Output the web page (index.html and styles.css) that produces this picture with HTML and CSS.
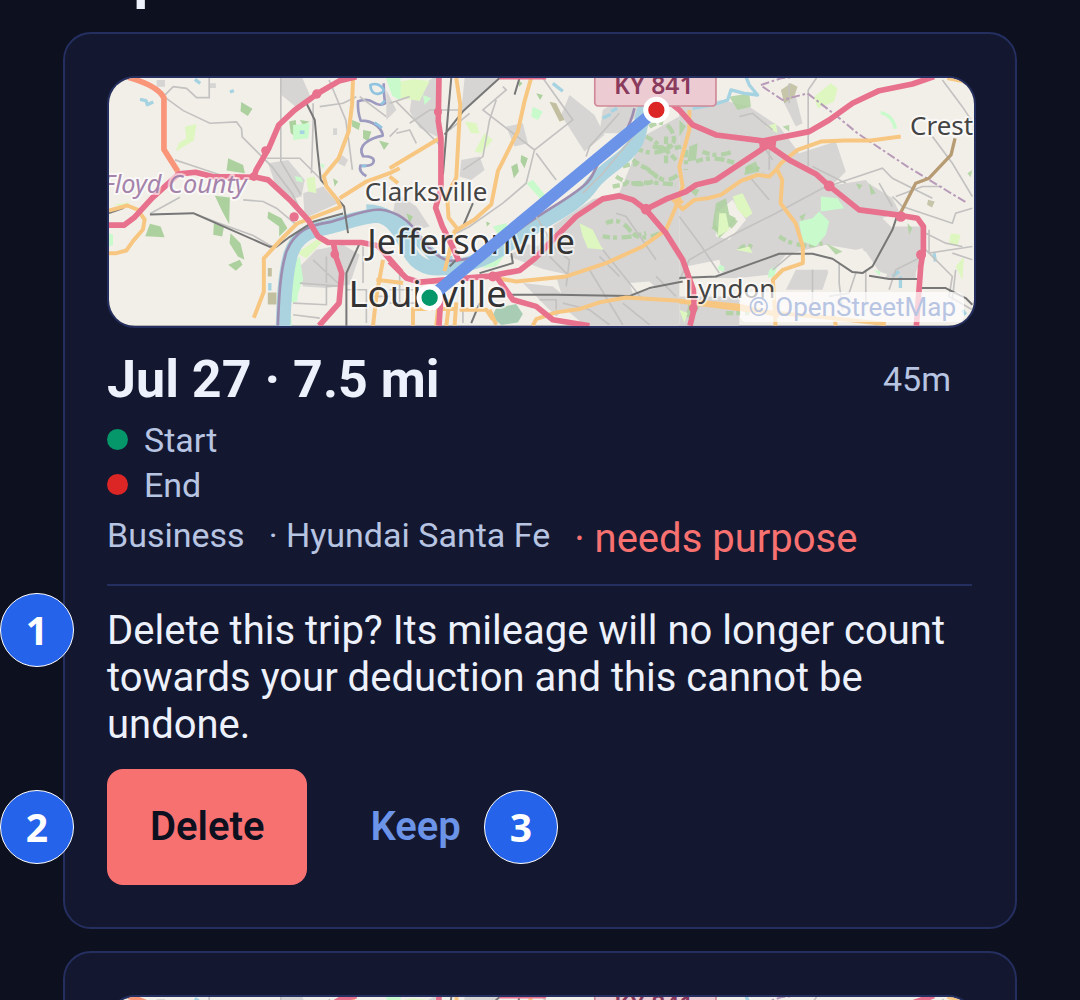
FILE: index.html
```
<!DOCTYPE html>
<html lang="en">
<head>
    <meta charset="UTF-8">
    <meta name="viewport" content="width=device-width, initial-scale=1.0">
    <title>Trips</title>
    <link rel="stylesheet" href="styles.css">
</head>
<body>
    <main class="screen">
        <h1 class="heading">Trips</h1>

        <article class="card">
            <div class="map">
                <svg class="mapImage" viewBox="27 24 2598 744" preserveAspectRatio="xMinYMin slice" role="img" aria-label="Map of the trip">
                    <g id="tripMap">
                        <rect x="27" y="24" width="2598" height="744" fill="#f2efe9"/>

                        <!-- built-up areas -->
                        <g fill="#d6d5d3">
                            <path d="M543 24h65l30 70-40 25-30-25-25-20zM505 280l60-10 50 60-10 50-40 10-40-50zM610 370l60-20 45 50-100 45zM600 590l50-50 80-15 50 30-30 90-70 10-70-5-15-40zM720 250l25 20-10 20-20-10zM700 175h12v20h-12zM330 40h18v14h-18zM170 30h25v20h-25zM860 60l30 60-30 30zM545 320l40 10 10 30-35-5z"/>
                            <g transform="translate(870)">
                                <path d="M70 60l60-36h20v180l-60-30-30-50zM225 24h100l-60 60-50 40zM215 270l55-10 15 40-40 30-35-10zM350 170l50-10 15 60-40 10zM540 75l75 60 30 60-60 50-70-110zM640 120l60-40 70 30-80 80-60 0zM760 200l110-60v568H700l-60-60-90-30-90-20-50-20 80-110 120-80 80-20zM500 620l100-20 270 40v130H590l-60-50zM20 370l60 40 40 60-40 10-70-50zM360 560l40-40 50 10-40 50zM400 640l90 10 60 50-50 40z"/>
                            </g>
                            <g transform="translate(1740)">
                                <path d="M0 110l130-20 80 20 90 60 60 80 110-35 30 90-40 40 100-10 80 50 20 40-50 20 60 60-10 120-60-20-40-60-120-20-120 30-50 60-90 10H0zM310 90l40-10 20 80-20 10zM500 340l60-10 50 60-40 30-60-20zM640 470h90v80l-20 60-70-10-50-30zM640 570l70 10v50l-90-5zM0 680h180v88H0zM350 600l100 0-20 60h-110z"/>
                            </g>
                        </g>
                        <g fill="#f2efe9">
                            <path d="M1590 640l60-5 20 20-70 15zM1080 130l50-10-20 60-40 10z"/>
                            <path d="M2230 550l60-15 30 60-50 20zM1760 590l100-20 10 40-90 30zM2180 570l30-10 10 60-30 10z"/>
                            <path d="M1850 430l50-40 40 60-50 60-40-10z"/>
                        </g>

                        <!-- woods, parks and golf courses -->
                        <g fill="#add19e">
                            <path d="M424 96l34 20-14 22-22-14zM385 265l45 20 5 25-55-8zM345 378l45 5-2 80-22-40zM342 460l30 12-5 28-27-5zM392 490l30 30 12 50-20-10-25-40zM385 585l35-15 8 15-20 18zM150 462l32 8 12 32-58-3zM505 425l40 20 18 30-25 25 0-30-35-25zM568 155l20-5 5 55-20-15zM790 180l25 5-10 30-15-10zM838 212l30 8-15 20zM757 150l25 10-5 20-20-10zM600 150l30 5-20 10zM700 325l15 10-10 15z"/>
                            <g transform="translate(870)">
                                <path d="M395 255l20 10-10 30-12-20zM365 290l18-10 5 25-15 20zM440 70l20 5-8 15zM385 30l14 10-10 10zM50 430l20 10-10 20zM290 455l12 5-10 10z"/>
                                <path fill="#a9cdb4" d="M320 715l60-12 20 30-15 25-50 8-28-25z"/>
                            </g>
                            <g transform="translate(1740)" opacity=".85">
                                <path d="M30 230l25-10-5 50-25 5zM200 290l30-15 10 30-45 10zM110 400l30-15 10 50 20 10-30 40-20 20-20-40zM150 80l60-10 5 40-40 10zM530 340l20 5-10 15zM685 460l15 15-10 20zM0 150l20 20-20 30zM20 350l40 10-10 20zM310 170l20-5 0 20zM865 310l15-10-5 22zM440 520l50 25-20 10zM360 440l20-10-10 25zM570 340l20 30-15 5zM30 690l30 20-20 40-20-10z"/>
                            </g>
                        </g>
                        <g fill="none" stroke="#add19e" stroke-width="13" stroke-dasharray="22 9 12 14 30 8" opacity=".85">
                            <path d="M1650 170q50-30 70 20t-60 40q60 10 85 0M1640 200q40 20 90 70M1610 235q60 30 110-10M1570 290q50-20 90 20t80 0M1550 320q60 40 120 10M1540 350q80-20 190-5M1520 460q40-20 70 20t90 10M1510 500q60 10 130-10M1700 200v80M1600 270l90 60"/>
                            <path d="M1810 245q40 20 90 0M1790 275q50-20 120 5M1920 540q20-25 50 0M1880 730h70M1760 240v60M1840 470q40 30 70-20M2040 500q60 40 130 20M1940 300q30-20 50 10"/>
                        </g>
                        <g fill="#def6c0">
                            <path d="M255 170l35-8-8 50-25 15-30 17 10-25 22-14zM620 325l25-5 5 50-25-5zM590 550l60-40 20 5-50 50zM38 405l50-8-10 12z"/>
                            <path d="M870 40l70-12 50 5-30 60-60-10zM1095 155l35 5 10 30-25 0zM1155 190l25 20-35 40-20-5zM1440 460l40 20 25 50 10 10-50-5-15-35z"/>
                            <path d="M1900 380l30-10 30 60-20 15-25-25zM1860 430l20 0 10 50-35 20zM2145 80l50-40 20 15-10 40-50 20zM2555 490l30 5-10 35-25-10zM2570 590l25-30-5 70zM2000 170l30-10 5 30zM1910 540l40-10 10 20zM1740 720l25 10-10 30z"/>
                        </g>
                        <g fill="#c8facc">
                            <path d="M858 24h45v68l-25-15zM580 165l50-5-5 45-45 5zM27 490l12 5v30l-12 5zM570 590l30-30 10 70-15 40-3 25-25 5zM560 735l15 5v28h-15zM585 318l20 5 5 15-20-5zM660 280l15 5-5 12z"/>
                            <path d="M1300 110l30 15-15 25-20-10zM1280 340l20-10 45 55-15 10zM970 75l25 10-20 20zM1180 470l40-10 5 15-30 20zM1170 560l50-10-30 40-40 5z"/>
                            <path d="M2100 455l40-10 20-20 30 30-10 40-30 35-40-15zM2165 380l50 5 20 30-70 10zM2010 600l25-15-10 35-20 5zM1860 585l15 5 0 15-20-5zM2325 600l20 5-5 12z"/>
                            <path d="M2345 128q36 8 44 48" fill="none" stroke="#c8facc" stroke-width="10"/>
                        </g>
                        <g fill="#b5b38d"><path d="M504 595h12v25h-12zM504 668h26v36h-26zM1350 95l20 5 25 50-15 5z" opacity=".8"/><path d="M2045 60l30-20 20 10-10 30-30 20zM2487 390l20 5-8 18-15-8z" opacity=".7"/></g>

                        <!-- rivers and creeks -->
                        <g fill="none" stroke-linejoin="round">
                            <path d="M550 770C552 690 555 620 572 555C590 500 625 482 680 473C740 458 780 440 830 437C880 440 905 490 935 555C965 600 1010 600 1070 590C1160 575 1200 540 1290 480C1370 430 1440 400 1480 340C1520 290 1580 270 1610 215C1630 170 1620 140 1650 85" stroke="#aad3df" stroke-width="44"/>
                            <path d="M800 420C860 420 900 455 960 515S1010 580 1060 575" stroke="#aad3df" stroke-width="34"/>
                            <path d="M534 768C538 680 540 610 560 545C585 485 625 466 690 457C750 440 790 420 840 419C890 425 930 450 960 500C1000 555 1040 580 1070 572C1140 565 1180 545 1240 495C1310 435 1390 400 1450 350C1490 320 1480 290 1520 250C1570 200 1590 180 1605 115" stroke="#9d8db0" stroke-width="8"/>
                            <path d="M852 40q0 30 4 60q-18 10-35-3t-46-3q-2 30 8 58q30 0 48 15t18 30q-32 6-52 22t-7 40q35 0 32 16t-40 12q-6 18 18 32" stroke="#9d9ac0" stroke-width="8"/>
                            <path d="M812 45q20-8 34 6t-8 20q-24 4-26-26zM856 92l-12 12M825 158l22 16M800 288l-14 0" stroke="#8fc4e0" stroke-width="8"/>
                            <path d="M120 88l18 4 4 12 18-8M285 28l16 12M390 66l12-4M600 187l14 0M510 640v22M1360 40l30 24M1510 145l24-12M1535 125l18-10M1780 115l60-10 45-15 10-30 40 10 40 5-25-30-10-25M2404 620v35M2380 620l20-15M2505 550l4 25M2590 720l10 15" stroke="#a5d3e2" stroke-width="10"/>
                        </g>

                        <!-- minor roads -->
                        <g fill="none" stroke="#c3c2c1" stroke-width="5">
                            <path d="M190 80l30-30 40 5 30 28 38 0V24M195 82l55 40 80 38 80-4 15 20 2 25 90 90 60 80 30 60M543 24v250l60 100M500 265h100l60 60M225 270l60 20 90 30M150 432l90-50M285 432l65 25 110 40 60 35M640 100v60l-5 150M660 110l70-10 40-20M688 30l50 120 10 70 10 80M860 140l-80-60M870 200l25-25M640 570l80 75M680 560v80M580 700l100 5v-60M600 640l130 10M580 735l80 10M740 660h60v100M790 530v110M810 680h60M430 390l60 5 40 20 60 50"/>
                            <g transform="translate(870)">
                                <path d="M0 100l60-20M20 95l130 130M60 160l60-40h90M340 50l10 10-70 60 155 120 115-90-100-140M320 90l-20 60-20 110-60 40M435 240l-25 100-70 60-100 70-40 20M440 250l60 80M600 230l-10 30M600 230l90-100M20 190l40-10 20 40M240 130l-60 50M690 620l-60-60M440 440l60 100 40 30-10 80M480 560l60 60M740 190l-100 120-60 60M680 430l30 10 90 130M520 700l80 20 60 45M600 600l100 165M640 540l120 150M700 700l80 65M0 660l70 0M30 600l0 100M0 700h130M220 640v120M800 620l60 60M450 690h50v30"/>
                            </g>
                            <g transform="translate(1740)">
                                <path d="M387 60v230M387 60l25-36M400 290l100 50M0 440l60 80 60 90M0 630l30-60 140-80 120-60 140-75 180-60 30 30 120 60M790 30l60 80 30 45M760 200l60 80 60 100M640 380l30 30 150 50 10-30 50-15M600 340l40 70M750 480l0 70 130-20M730 560l-80 40-20 60M740 540l80 80-10 60 70 40M480 580v60l10 80M530 610l-20 60-60 10M820 550l60 20M650 380l80-30h60M740 490l60 30 50 10M330 40v60M240 210l40 60M180 140l40-10 60 50M280 600l60-50M400 600v100M560 600v100M830 600l-10 90M210 320l60 70M270 240v60"/>
                            </g>
                        </g>
                        <g fill="none" stroke="#777" stroke-width="6" stroke-linejoin="round">
                            <path d="M27 430l45-16M150 434l130-4 80 35 150 66h20l40-30 70-45 90-25M620 100l25 50 8 90 10 90 70 80 12 80M780 520l-40 90v158"/>
                            <path d="M1200 24l-110 100-55 70M1055 24l-10 110-15 180M1260 24l-15 50M1050 590l30-30M1120 400l-30 70M1140 610l100-30-5-30M1230 675h140l220 4 60-24 100-20M1140 700l-25 60"/>
                            <path d="M1740 625l110-5 190-68h100l60 15 60 40 30 3 30-20 60-110 15-45M2310 618l60 10 90 0M2460 655l80 0 60 30 20 20"/>
                        </g>
                        <path d="M1985 45l60-20 40-5M1990 50l60 40 75-20 90 70 60 50 150 100 180 110" fill="none" stroke="#b79bb9" stroke-width="6" stroke-dasharray="26 8 8 8"/>

                        <!-- secondary roads -->
                        <g fill="none" stroke="#f7c681" stroke-width="12" stroke-linejoin="round">
                            <path d="M27 422l55-15 30 12 22 30-5 30-30 35-20 28-30 8H27M760 24l-3 80-10 80-30 80-45 55 8 30 32 40 10 22-130 50-50 50-50 55 0 100-30 78M720 385l80-50 70-25 30-15"/>
                            <path d="M870 295l150-90M870 320l25 20M1070 24l12 80-12 220-28 50 5 70 28 35M1295 24l-20 70-20 90-60 120-20 100-50 45-60 35-30 120M850 570l-20 110-10 88M830 630l80 10M1770 120l0 60-30 110 10 60-20 60-30 70-70 50-110 50-120 40-150 15-60-10M1080 720h80l20 30M1300 768l10-20 60-20 70-10 60-20 80-15 160 10 80 5 100 10 120 30M1050 690l-10 78M1065 768l5-70M1010 768l5-50 55 0M940 768v-50h60M1170 720l20 45"/>
                            <path d="M1740 390l10 10M2030 300l-20 20-35-5-50 18-60 42-40 10-40 5-35 28-30-30M2030 300l15-20 50-40 70-25 70-3 80 0 90-12M2545 24l50 10 30 15M2034 300l15 30-5 70 45 60 22 70 0 50-60 20-30 30 8 138M2205 740l5 28M1740 695l220 28 220 20 180 20"/>
                        </g>
                        <path d="M2568 205l-12 50-66 70-40 15-50 98" fill="none" stroke="#b69b73" stroke-width="10" stroke-linejoin="round"/>

                        <!-- motorways -->
                        <g fill="none" stroke="#e8718d" stroke-width="17" stroke-linejoin="round">
                            <path d="M85 22q90 26 107 62v155l42 66" stroke="#f9967a"/>
                            <path d="M770 20l-50 12-65 38-70 50-48 45-30 70-38 65-7 22M27 466h45l30-22 55-60 80-72 50-5 50 13 132 2 36 8 70 65 50 55 30 50 30 18h100l50 10 70 80"/>
                            <path d="M700 515l10 50 16 45-8 90-60 68"/>
                            <path d="M1018 24l-2 130 8 50 0 150-16 60 20 55 30 60 20 45M1018 768l8-120M1200 20h140"/>
                            <path d="M870 575l50 50 40 12 210-18 90-17 45-35 65-67 60-60 80-53 50-9 40 12 40 30 60 70 50 80 32 90 3 55-13 53M1190 619l50 71 70 20 50 40 110 18M1640 418l60-30 60-23 30-20 60-15 150-100"/>
                            <path d="M1690 80l50 40 40 45 70 30 140 18 140-28 60-35 70-50 80-38 100-20 65-22"/>
                            <path d="M2005 225l65 45 80 42 40 36 90 72 120 16 55 9 18 25v70l-8 50-13 178"/>
                        </g>
                        <g fill="#e8718d">
                            <circle cx="497" cy="242" r="13"/><circle cx="462" cy="320" r="13"/><circle cx="583" cy="441" r="14"/><circle cx="651" cy="72" r="14"/><circle cx="705" cy="553" r="13"/><circle cx="1015" cy="125" r="12"/><circle cx="1180" cy="620" r="15"/><circle cx="1640" cy="418" r="16"/><path d="M1978 208h54l-4 30h-46z"/><circle cx="2190" cy="348" r="16"/><circle cx="2405" cy="440" r="16"/><circle cx="2466" cy="555" r="15"/><circle cx="1782" cy="715" r="13"/>
                        </g>

                        <rect x="1486" y="-20" width="364" height="128" rx="10" fill="#ecccd2" stroke="#cf8997" stroke-width="5"/>
                        <text class="mapShield" x="1544" y="73">KY 841</text>
                        <text class="mapCounty" x="8" y="370">Floyd County</text>
                        <g class="mapTown">
                            <text x="795" y="394">Clarksville</text>
                            <text x="1756" y="686">Lyndon</text>
                            <text x="2433" y="195">Crest</text>
                        </g>
                        <text class="mapCity" x="803" y="553">Jeffersonville</text>
                        <text class="mapCity mapMainCity" x="746" y="711">Louisville</text>

                        <!-- trip line and its two ends -->
                        <path d="M990 684L1671 120" stroke="#6b93e8" stroke-width="36"/>
                        <circle cx="990" cy="684" r="32" fill="#059669" stroke="#fff" stroke-width="15"/>
                        <circle cx="1671" cy="120" r="32" fill="#dc2626" stroke="#fff" stroke-width="15"/>
                    </g>
                </svg>
                <span class="mapCredit">© OpenStreetMap</span>
            </div>

            <div class="titleRow">
                <h2 class="title">Jul 27 · 7.5 mi</h2>
                <span class="duration">45m</span>
            </div>

            <ul class="stops">
                <li class="stop"><span class="dot startDot"></span>Start</li>
                <li class="stop"><span class="dot endDot"></span>End</li>
            </ul>

            <div class="meta">
                <span>Business</span>
                <span>· Hyundai Santa Fe</span>
                <span class="warning">· needs purpose</span>
            </div>

            <section class="confirm">
                <p class="question">
                    Delete this trip? Its mileage will no longer count towards your deduction and this cannot be undone.
                    <span class="badge edgeBadge">1</span>
                </p>
                <div class="actions">
                    <button class="btn deleteButton" type="button">Delete</button>
                    <button class="btn keepButton" type="button">Keep</button>
                    <span class="badge edgeBadge">2</span>
                    <span class="badge keepBadge">3</span>
                </div>
            </section>
        </article>

        <article class="card">
            <div class="map">
                <svg class="mapImage" viewBox="27 24 2598 744" preserveAspectRatio="xMinYMin slice" role="img" aria-label="Map of the trip">
                    <use href="#tripMap"/>
                </svg>
            </div>
        </article>
    </main>
</body>
</html>
```
FILE: styles.css
```
* {
    box-sizing: border-box;
}
html {
    height: 100%;
    overflow: hidden;
}
body {
    margin: 0;
    height: 100%;
    overflow: hidden;
    background-color: #0d101f;
    color: #edf1fb;
    font-family: Roboto, "Liberation Sans", sans-serif;
    font-size: 40px;
    line-height: 47px;
}
.screen {
    display: flex;
    flex-direction: column;
    gap: 22px;
    padding: 0 63px;
}
.heading {
    margin: -56px 0 0;
    font-size: 58px;
    line-height: 66px;
}
.card {
    padding: 42px 43px 42px 42px;
    border: 2px solid #252f5f;
    border-radius: 28px;
    background-color: #131830;
}

/* map */
.map {
    position: relative;
    box-sizing: content-box;
    width: 100%;
    border: 2px solid #252f5f;
    border-radius: 28px;
    overflow: hidden;
}
.mapImage {
    display: block;
    width: 100%;
}
.mapTown,
.mapCity,
.mapCounty,
.mapShield {
    font-family: "Noto Sans", sans-serif;
}
.mapTown,
.mapCity,
.mapCounty {
    paint-order: stroke;
    stroke: rgba(255, 255, 255, 0.6);
    stroke-width: 12px;
    stroke-linejoin: round;
}
.mapTown {
    font-size: 78px;
    fill: #444;
}
.mapCity {
    font-size: 103px;
    fill: #333;
}
.mapMainCity {
    font-size: 110px;
}
.mapCounty {
    font-size: 76px;
    font-style: italic;
    fill: #a583ab;
}
.mapShield {
    font-size: 74px;
    font-weight: 600;
    fill: #8a3a5c;
}
.mapCredit {
    position: absolute;
    right: 10px;
    bottom: 4px;
    padding: 0 8px;
    border-radius: 6px;
    background-color: rgba(255, 255, 255, 0.7);
    color: #b7c4e2;
    font-size: 26px;
    line-height: 30px;
}

/* trip summary */
.titleRow {
    display: flex;
    align-items: center;
    justify-content: space-between;
    margin-top: 21px;
    padding-right: 21px;
}
.title {
    margin: 0;
    font-size: 52px;
    line-height: 61px;
}
.duration,
.stops,
.meta {
    color: #b7c4e2;
    font-size: 34px;
    line-height: 40px;
}
.stops {
    display: flex;
    flex-direction: column;
    gap: 5px;
    margin: 10px 0;
    padding: 0;
    list-style: none;
}
.stop {
    display: flex;
    align-items: center;
    gap: 16px;
}
.dot {
    width: 21px;
    height: 21px;
    border-radius: 50%;
}
.startDot { background-color: #059669; }
.endDot { background-color: #dc2626; }
.meta {
    display: flex;
    flex-wrap: wrap;
    align-items: flex-start;
    gap: 24px;
}
.warning {
    color: #f87171;
    font-size: 40px;
    line-height: 48px;
}

/* delete confirmation */
.confirm {
    display: flex;
    flex-direction: column;
    gap: 21px;
    margin-top: 21px;
    padding-top: 21px;
    border-top: 2px solid #252f5f;
}
.question {
    position: relative;
    margin: 0;
}
.actions {
    position: relative;
    display: flex;
    gap: 20px;
}
.btn {
    padding: 0 43px;
    border: none;
    border-radius: 16px;
    background: none;
    font-family: inherit;
    font-size: 40px;
    font-weight: 600;
    line-height: 116px;
    cursor: pointer;
}
.deleteButton {
    background-color: #f87171;
    color: #0d101f;
}
.keepButton { color: #6b93e8; }
.badge {
    position: absolute;
    width: 74px;
    height: 74px;
    border: 1px solid #fff;
    border-radius: 50%;
    background-color: #2563eb;
    color: #fff;
    font-family: "Noto Sans", sans-serif;
    font-size: 39px;
    font-weight: 700;
    line-height: 72px;
    text-align: center;
}
.edgeBadge { left: -107px; }
.question .edgeBadge { top: -14px; }
.actions .badge { top: 21px; }
.keepBadge { left: 377px; }
```
